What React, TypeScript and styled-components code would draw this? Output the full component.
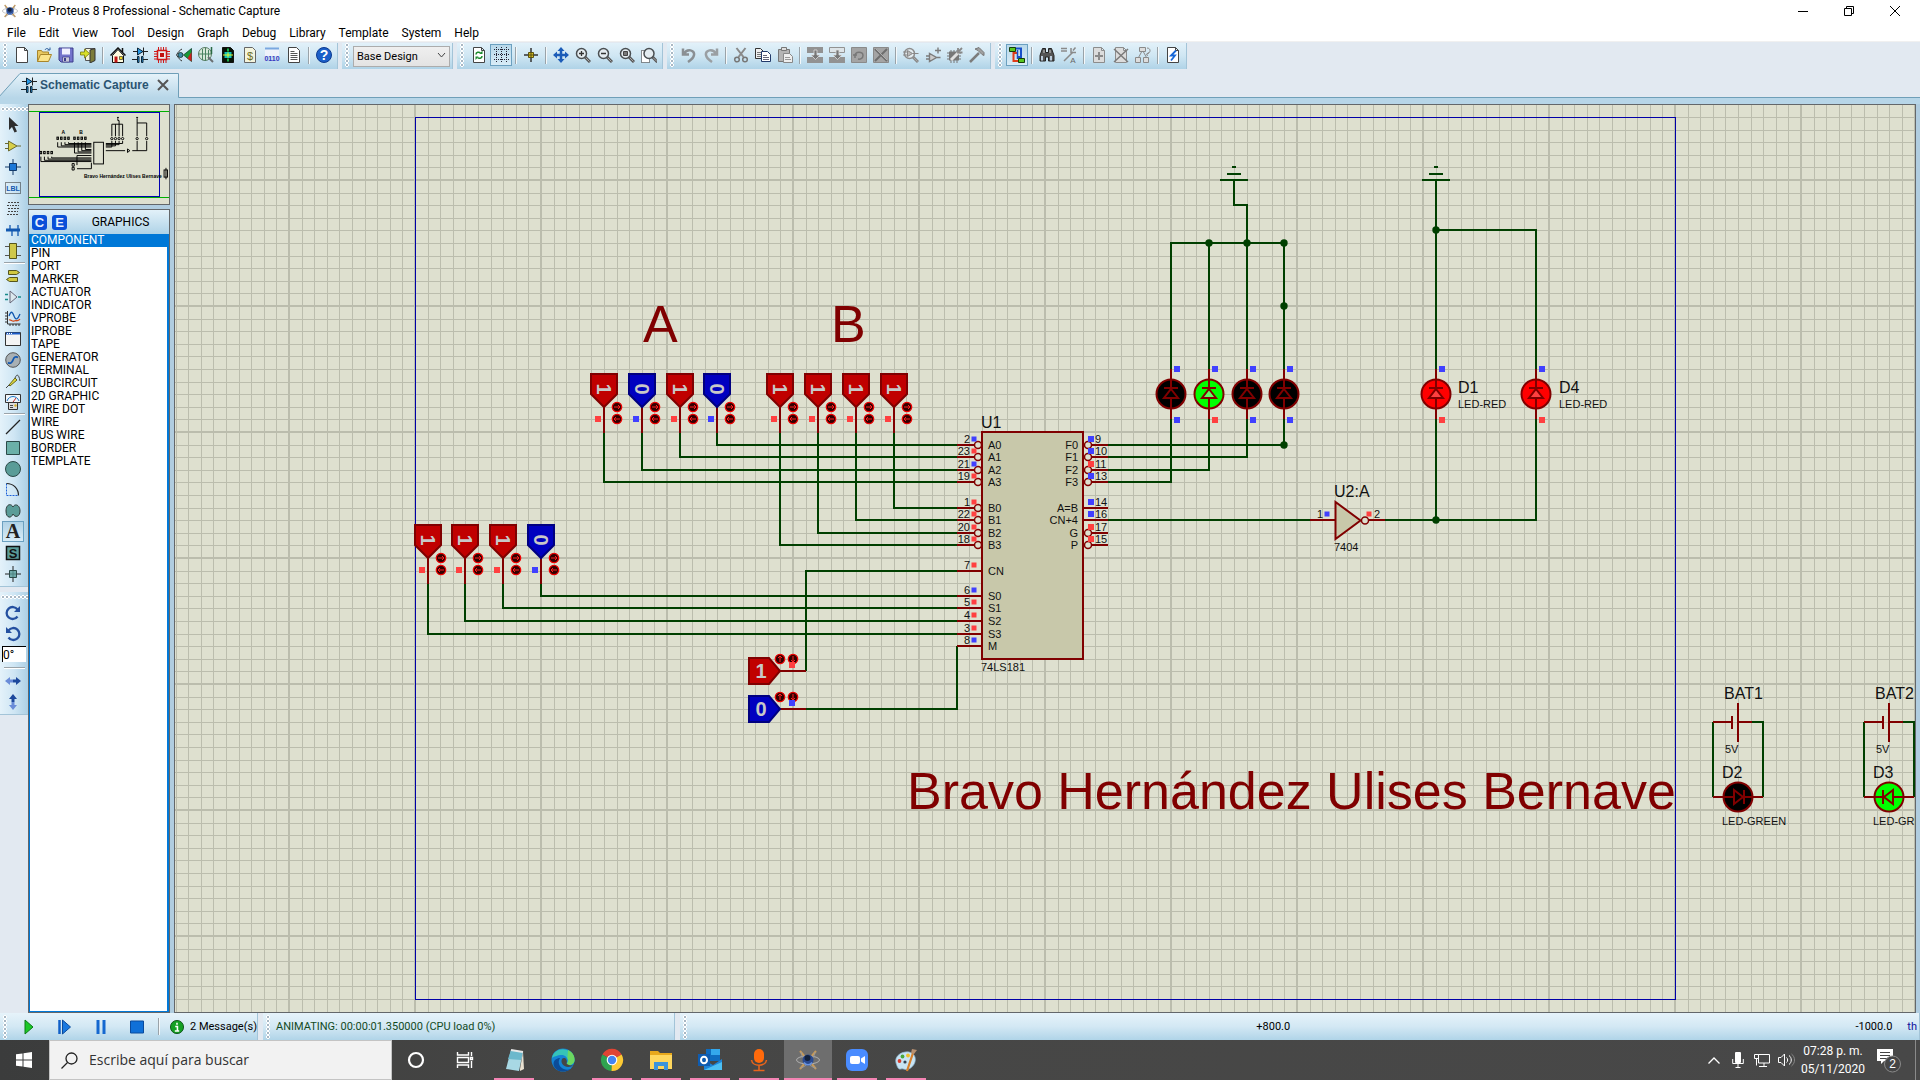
import React from "react";
import styled, { createGlobalStyle, css } from "styled-components";

const ui = `"Segoe UI", "Open Sans", "Noto Sans", sans-serif`;
const compact = `Roboto, "Liberation Sans", sans-serif`;
const sans = `"Liberation Sans", Arial, sans-serif`;
const serif = `"Liberation Serif", "Times New Roman", serif`;

const Global = createGlobalStyle`
  *, *::before, *::after { box-sizing: border-box; }
  html, body { margin: 0; padding: 0; }
  body { font-family: ${compact}; color: #000; background: #e2e9f1; overflow: hidden; }
  button, input, select { font: inherit; color: inherit; margin: 0; }
`;

/* ---------- shell ---------- */

const Window = styled.div`
  display: flex;
  flex-direction: column;
  height: 100vh;
`;

const TitleBar = styled.header`
  display: flex;
  align-items: center;
  height: 22px;
  padding: 0 2px;
  background: #fff;
`;

const TitleText = styled.h1`
  flex: 1;
  margin: 0;
  padding-left: 5px;
  font: 12px/22px ${compact};
`;

const WindowButton = styled.button`
  width: 46px;
  height: 20px;
  padding: 0;
  border: 0;
  background: none;
  display: grid;
  place-items: center;
`;

const MenuBar = styled.nav`
  display: flex;
  height: 19px;
  padding-left: 7px;
  gap: 13px;
  background: #fff;
`;

const MenuItem = styled.button`
  padding: 0;
  border: 0;
  background: none;
  font: 12px/22px ${compact};
`;

const ToolbarRow = styled.div`
  display: flex;
  gap: 4px;
  padding: 1px 0 4px;
  background: #e2e9f1;
  border-top: 1px solid #f0f0f0;
`;

const dots = css`
  background-image: radial-gradient(circle at 2px 2px, #a9b8c4 1px, #fff 1px, #fff 2px, transparent 2px);
  background-size: 4px 4px;
`;

const Toolbar = styled.div`
  display: flex;
  align-items: center;
  height: 26px;
  padding: 0 2px 2px 0;
  background: linear-gradient(#e2f1f9, #cfe6f3 50%, #afd3e7);
  border-right: 1px solid #a3c4d8;
`;

const Grip = styled.span`
  flex: none;
  width: 4px;
  height: 24px;
  margin: 0 4px 0 3px;
  ${dots}
`;

const ToolButton = styled.button<{ $on?: boolean }>`
  width: 22px;
  height: 22px;
  padding: 0;
  display: grid;
  place-items: center;
  border: 1px solid ${(p) => (p.$on ? "#6ba0c0" : "transparent")};
  background: ${(p) => (p.$on ? "linear-gradient(#b8d8ea, #d8ecf7)" : "none")};
`;

const Separator = styled.span`
  flex: none;
  width: 2px;
  height: 17px;
  margin: 0 3px;
  background: #9aa3a9;
  border-right: 1px solid #f4f8fa;
`;

const SelectBox = styled.div`
  position: relative;
  width: 97px;
  height: 21px;
`;

const Select = styled.select`
  appearance: none;
  width: 100%;
  height: 100%;
  padding: 0 0 0 3px;
  border: 1px solid #acacac;
  border-radius: 0;
  background: linear-gradient(#efefef, #e3e3e3);
  font: 11px/18px ${compact};
`;

const SelectArrow = styled.svg`
  position: absolute;
  right: 4px;
  top: 7px;
  pointer-events: none;
`;

const TabRow = styled.div`
  display: flex;
  height: 31px;
  background: #e2e9f1;
  position: relative;
  border-bottom: 6px solid #b7d6e8;
`;

const TabShape = styled.svg`
  position: absolute;
  left: 0;
  top: 0;
  width: 100%;
  height: 25px;
`;

const Tab = styled.div`
  position: relative;
  display: flex;
  align-items: center;
  height: 24px;
  padding-left: 21px;
  gap: 3px;
  font: bold 12px ${sans};
  color: #2b5472;
`;

const TabClose = styled.button`
  padding: 0;
  margin-left: 5px;
  border: 0;
  background: none;
  display: grid;
`;

const Workspace = styled.main`
  flex: 1;
  min-height: 0;
  display: flex;
  background: #b0cde0;
  padding-right: 4px;
`;

/* ---------- mode tools ---------- */

const ModeColumn = styled.aside`
  width: 28px;
  background: #e2e9f1;
  display: flex;
  flex-direction: column;
  gap: 5px;
`;

const ModeBar = styled.div`
  display: flex;
  flex-direction: column;
  padding: 0 3px 2px 2px;
  background: linear-gradient(90deg, #e4f2fa, #cfe6f4 50%, #add0e5);
  border-bottom: 1px solid #a3c4d8;
`;

const ModeGrip = styled.span`
  height: 4px;
  margin: 3px -3px 3px -1px;
  ${dots}
`;

const ModeButton = styled.button<{ $on?: boolean }>`
  height: 21px;
  width: 22px;
  padding: 0;
  display: grid;
  place-items: center;
  border: 1px solid ${(p) => (p.$on ? "#6ba0c0" : "transparent")};
  background: ${(p) => (p.$on ? "linear-gradient(#b0d2e6, #d8ecf7)" : "none")};
`;

const ModeLine = styled.span`
  height: 2px;
  margin: 1px 0 1px 2px;
  background: #9aa3a9;
  border-bottom: 1px solid #fff;
`;

const AngleInput = styled.input`
  width: 24px;
  height: 16px;
  margin: 2px 0 4px;
  padding: 0;
  border: 0;
  border-top: 1px solid #000;
  border-left: 1px solid #000;
  background: #fff;
  font: 12px/15px ${compact};
`;

/* ---------- side panel ---------- */

const SidePanel = styled.aside`
  width: 146px;
  padding-right: 4px;
  display: flex;
  flex-direction: column;
  gap: 4px;
`;

const Overview = styled.div`
  height: 101px;
  border: 1px solid #63676a;
  background: #dee0cf;
`;

const Devices = styled.section`
  flex: 1;
  min-height: 0;
  display: flex;
  flex-direction: column;
  border: 1px solid #63676a;
`;

const DevicesHead = styled.div`
  display: flex;
  align-items: center;
  height: 24px;
  padding-left: 3px;
  gap: 5px;
  background: linear-gradient(#e2f1f9, #afd3e7);
`;

const DeviceButton = styled.button`
  width: 15px;
  height: 15px;
  padding: 0;
  border: 0;
  border-radius: 3px;
  background: #0a4fd8;
  color: #e8f0ff;
  font: bold 13px/15px ${sans};
`;

const DevicesTitle = styled.h2`
  flex: 1;
  margin: 0;
  text-align: center;
  font: 12px/24px ${compact};
`;

const List = styled.ul`
  flex: 1;
  margin: 0;
  padding: 0;
  list-style: none;
  background: #fff;
  border: solid #0078d7;
  border-width: 0 2px 1px 1px;
`;

const ListItem = styled.li<{ $on: boolean }>`
  height: 13px;
  padding-left: 1px;
  font: 12px/13px ${compact};
  color: ${(p) => (p.$on ? "#fff" : "#000")};
  background: ${(p) => (p.$on ? "#0078d7" : "none")};
`;

const Canvas = styled.section`
  flex: 1;
  min-width: 0;
  border: 1px solid #63676a;
  background: #dee0cf;
`;

const Fill = styled.svg`
  display: block;
  width: 100%;
  height: 100%;
`;

/* ---------- status ---------- */

const StatusRow = styled.footer`
  display: flex;
  gap: 5px;
  height: 27px;
  background: #e2e9f1;
  font: 11px/27px ${compact};
  white-space: nowrap;
`;

const StatusBox = styled.div<{ $w?: number }>`
  display: flex;
  align-items: center;
  ${(p) => (p.$w ? `width: ${p.$w}px;` : "flex: 1;")}
  background: linear-gradient(#e6f3fa, #d3e8f4 50%, #b0d4e8);
  border-right: 1px solid #a3c4d8;
`;

const PlayButton = styled.button`
  flex: none;
  width: 36px;
  height: 24px;
  padding: 0;
  border: 0;
  background: none;
  display: grid;
  place-items: center;
`;

const Messages = styled.button`
  display: flex;
  align-items: center;
  gap: 6px;
  padding: 0 0 0 7px;
  border: 0;
  background: none;
`;

const SimText = styled.span`
  padding-left: 2px;
  color: #134a1e;
`;

const CoordX = styled.span`
  flex: 1;
  text-align: center;
`;

const CoordY = styled.span`
  padding-right: 15px;
`;

const Unit = styled.span`
  color: #10109a;
  padding-right: 2px;
`;

/* ---------- taskbar ---------- */

const Taskbar = styled.div`
  display: flex;
  height: 40px;
  background: linear-gradient(90deg, #3b3c3c, #464645 30%, #484848);
  color: #fff;
`;

const TaskButton = styled.button<{ $open?: boolean; $active?: boolean }>`
  width: 48px;
  height: 40px;
  margin-right: 1px;
  padding: 0;
  border: 0;
  display: grid;
  place-items: center;
  background: ${(p) => (p.$active ? "#6e6e6e" : "none")};
  position: relative;
  &::after {
    content: "";
    position: absolute;
    bottom: 0;
    left: ${(p) => (p.$active ? 0 : 4)}px;
    right: ${(p) => (p.$active ? 0 : 4)}px;
    height: 2px;
    background: ${(p) => (p.$open ? "#f484b4" : "transparent")};
  }
`;

const Search = styled.label`
  width: 343px;
  height: 40px;
  display: flex;
  align-items: center;
  gap: 11px;
  padding-left: 11px;
  background: #f2f2f2;
  border: 1px solid #c4c4c4;
`;

const SearchInput = styled.input`
  flex: 1;
  min-width: 0;
  padding: 0;
  border: 0;
  background: none;
  outline: 0;
  font: 14px/20px ${ui};
  &::placeholder { color: #333; opacity: 1; }
`;

const Tray = styled.div`
  margin-left: auto;
  display: flex;
  align-items: center;
`;

const TrayButton = styled.button`
  width: 24px;
  height: 40px;
  padding: 0;
  border: 0;
  background: none;
  display: grid;
  place-items: center;
`;

const Clock = styled.time`
  width: 70px;
  text-align: center;
  font: 12px/18px ${compact};
`;

const Notices = styled.button`
  width: 42px;
  height: 40px;
  margin-right: 5px;
  padding: 0;
  border: 0;
  background: none;
  display: grid;
  place-items: center;
`;

const ShowDesktop = styled.button`
  width: 5px;
  height: 40px;
  padding: 0;
  border: 0;
  border-left: 1px solid #8a8a8a;
  background: none;
`;

/* ---------- icons ---------- */

const Icon = ({ children, s = 16 }: { children: React.ReactNode; s?: number }) => (
  <svg width={s} height={s} viewBox="0 0 16 16" fill="none" aria-hidden="true">
    {children}
  </svg>
);

const Mag = ({ inner, dim }: { inner?: React.ReactNode; dim?: boolean }) => (
  <>
    <path d="M10 10l5 5" stroke={dim ? "#888" : "#555"} strokeWidth="3" />
    <path d="M10.500 10.500l4 4" stroke="#aaa" strokeWidth="1" />
    <circle cx="6.500" cy="6.500" r="5" fill="#e4ecf0" stroke={dim ? "#8d8d8d" : "#4a4f52"} strokeWidth="1.500" />
    {inner}
  </>
);

const sheet = (dim?: boolean) => (
  <path d="M2.500 .5h8l3 3v12h-11zM10.500 .5v3h3" fill={dim ? "#dcdcdc" : "#fff"} stroke={dim ? "#8c8c8c" : "#444"} />
);

const schematicMark = (
  <>
    <path d="M1 4.500h15M11.500 .5v8M0 12.500h5M11 12.500h5" stroke="#222" />
    <path d="M5.500 1v7l5.500-3.500z" fill="#2a9be8" stroke="#0c2436" />
    <path d="M5.500 9.500h1.500v6h-1.500zM9.500 9.500h1.500v6h-1.500z" fill="#2a9be8" stroke="#0c2436" />
  </>
);

const icons: Record<string, React.ReactNode> = {
  new: sheet(),
  open: (
    <>
      <path d="M1.500 14.500v-11h4l1 1.500h6v3" fill="#e8c860" stroke="#a8852a" />
      <path d="M1.500 14.500l3-7h11l-3 7z" fill="#fbe48a" stroke="#a8852a" />
      <path d="M9 3c1-2 3-2 4 0M11.500 3h2.500v-2.500" stroke="#2a5a9a" />
    </>
  ),
  save: (
    <>
      <path d="M1 1h14v14h-12l-2-2z" fill="#7474cc" stroke="#3c3c8c" />
      <path d="M4 1.500h8v6h-8z" fill="#f0f0ff" />
      <path d="M4.500 10h7v5h-7z" fill="#c8c8d8" stroke="#3c3c8c" strokeWidth=".7" />
      <path d="M6 11h2v3h-2z" fill="#3c3c8c" />
    </>
  ),
  exit: (
    <>
      <path d="M5.500 1.500h9v12h-9z" fill="#f4f4d8" stroke="#555" />
      <path d="M10 3l5-1.500v12l-5 2.500z" fill="#7c7c3a" stroke="#333" />
      <path d="M0.500 5h4v-3l5 4.500-5 4.500v-3h-4z" fill="#d8e028" stroke="#777710" strokeWidth=".8" />
    </>
  ),
  home: (
    <>
      <path d="M2.500 8.500v7h11v-7l-5.500-6z" fill="#fffce0" stroke="#111" />
      <path d="M.5 8.500l7.500-7.500 7.500 7.500M12.500 5v-4" stroke="#111" strokeWidth="1.500" />
      <path d="M4.500 9.500h3v6h-3z" fill="#c01818" />
      <path d="M9.500 9.500h3v3h-3z" fill="#f0d820" stroke="#333" strokeWidth=".7" />
    </>
  ),
  schem: schematicMark,
  pcb: (
    <>
      <path d="M4.500 0v16M7 0v16M9.500 0v16M12 0v16M0 4.500h16M0 7h16M0 9.500h16M0 12h16" stroke="#d01818" />
      <path d="M3.500 3.500h9v9h-9z" fill="#e8ecee" stroke="#d01818" strokeWidth="1.500" />
      <path d="M6 6h4v4h-4z" fill="#c01010" />
    </>
  ),
  view3d: (
    <>
      <path d="M15.500 1.500v13l-8-6.500z" fill="#189838" stroke="#143" strokeWidth=".8" />
      <path d="M15.500 5v9.500l-4-3.200z" fill="#d02020" />
      <path d="M6 2c-2 1-4 3-5.500 6 2 3 3.500 5 5.500 6" stroke="#333" />
      <circle cx="4.500" cy="8" r="2.500" fill="#3a8aa8" stroke="#244" />
    </>
  ),
  gerber: (
    <>
      <circle cx="7" cy="7" r="6.500" fill="#d8e8da" stroke="#567a62" />
      <path d="M4.500 2v11M7.500 1v13M1 7h12M10.500 3v9" stroke="#4a8260" />
      <path d="M13.500 0v7" stroke="#2a6a44" strokeWidth="1.500" />
      <path d="M10 10l5 5" stroke="#6a6f72" strokeWidth="2" />
    </>
  ),
  design: (
    <>
      <path d="M2.500 .5h8l3 3v12h-11z" fill="#061206" stroke="#111" />
      <path d="M8 1.500v3M8 11.500v3" stroke="#20e060" strokeWidth="1.500" />
      <path d="M4.500 5h7v6h-7z" fill="#10c0b8" />
      <path d="M3 8h10M8 5.500v5" stroke="#e8f828" />
    </>
  ),
  bom: (
    <>
      <path d="M2.500 .5h8l3 3v12h-11z" fill="#f4f4dc" stroke="#666" />
      <text x="8" y="12.500" fontFamily={sans} fontSize="11" fill="#6a6a20" textAnchor="middle">$</text>
    </>
  ),
  code: (
    <>
      <path d="M1 1h14v8h-14z" fill="#eef2fa" />
      <path d="M1 1.500h14" stroke="#7aa8e0" strokeWidth="2" />
      <text x="8" y="14" fontFamily={sans} fontWeight="bold" fontSize="7" fill="#3838c0" textAnchor="middle">0110</text>
    </>
  ),
  notes: (
    <>
      <path d="M2.500 .5h8l3 3v12h-11z" fill="#fff" stroke="#444" />
      <path d="M4.500 4.500h4M4.500 6.500h7M4.500 8.500h7M4.500 10.500h7M4.500 12.500h7" stroke="#555" />
    </>
  ),
  help: (
    <>
      <circle cx="8" cy="8" r="7.500" fill="#1c5fc8" stroke="#0c3a90" />
      <text x="8" y="13" fontFamily={sans} fontWeight="bold" fontSize="14" fill="#fff" textAnchor="middle">?</text>
    </>
  ),
  refresh: (
    <>
      {sheet()}
      <path d="M5 7.500c0-2.500 3-3 4.500-1.500M11 9c0 2.500-3 3-4.500 1.500" stroke="#1a8a2a" strokeWidth="1.500" />
      <path d="M8.500 7h3v-3.500zM7.500 9.500h-3v3.500z" fill="#1a8a2a" />
    </>
  ),
  grid: (
    <path d="M1 2.500h15M1 7.500h15M1 12.500h15M3.500 0v16M8.500 0v16M13.500 0v16" stroke="#223" strokeDasharray="1 1" />
  ),
  origin: (
    <>
      <path d="M8 1v14M1 8h14" stroke="#333" strokeWidth="1.500" />
      <path d="M5.500 5.500h5v5h-5z" fill="#d8c020" stroke="#5a5010" />
      <path d="M8 6v4M6 8h4" stroke="#5a5010" />
    </>
  ),
  pan: (
    <>
      <path d="M8 2v12M2 8h12" stroke="#1c5cb8" strokeWidth="2.500" />
      <path d="M8 0l3.500 4h-7zM8 16l3.500-4h-7zM0 8l4-3.500v7zM16 8l-4-3.500v7z" fill="#1c5cb8" />
    </>
  ),
  zin: <Mag inner={<path d="M4 6.500h5M6.500 4v5" stroke="#333" strokeWidth="1.300" />} />,
  zout: <Mag inner={<path d="M4 6.500h5" stroke="#333" strokeWidth="1.500" />} />,
  zall: <Mag inner={<path d="M4.500 4.500h4v4h-4z" fill="#777" stroke="#444" />} />,
  zarea: (
    <>
      <path d="M.5 3.500h8v12h-8z" fill="#fff" stroke="#222" strokeDasharray="1 1" />
      <g transform="translate(1.500 0)"><Mag /></g>
    </>
  ),
  undo: <path d="M2 1.500v6h6M3 7c3-6 11-4 10 1-.5 3-3 5-6 7" stroke="#8a8f93" strokeWidth="2.500" />,
  redo: <path d="M14 1.500v6h-6M13 7c-3-6-11-4-10 1 .5 3 3 5 6 7" stroke="#9a9fa3" strokeWidth="2.500" />,
  cut: (
    <>
      <path d="M3.500 1l7 9M12.500 1l-7 9" stroke="#8a8a8a" strokeWidth="2" />
      <circle cx="4" cy="12.500" r="2.300" stroke="#777" strokeWidth="1.500" />
      <circle cx="12" cy="12.500" r="2.300" stroke="#777" strokeWidth="1.500" />
    </>
  ),
  copy: (
    <>
      <path d="M.5 1.500h5l3 3v7h-8z" fill="#f0f0f0" stroke="#333" />
      <path d="M2 5.500h4M2 7.500h5M2 9.500h4" stroke="#777" />
      <path d="M6.500 4.500h6l3 3v7h-9z" fill="#fff" stroke="#223a6a" />
      <path d="M8 8.500h4M8 10.500h6M8 12.500h6" stroke="#667" />
    </>
  ),
  paste: (
    <>
      <path d="M1.500 2.500h11v12h-11z" fill="#b4b4b4" stroke="#777" />
      <path d="M4.500 .5h5v3h-5z" fill="#ddd" stroke="#777" />
      <path d="M6.500 6.500h6l3 3v6h-9z" fill="#eee" stroke="#888" />
      <path d="M8 10.500h5M8 12.500h6" stroke="#999" />
    </>
  ),
  blkcopy: (
    <>
      <path d="M0 0h16v6h-16zM0 10h16v6h-16z" fill="#929292" />
      <path d="M7 3h3v5h3l-4.500 4.500-4.500-4.500h3z" fill="#777" stroke="#ddd" strokeWidth=".8" />
    </>
  ),
  blkmove: (
    <>
      <path d="M.5 .5h15v5h-15z" fill="#dde4e8" stroke="#929292" />
      <path d="M0 10h16v6h-16z" fill="#929292" />
      <path d="M7 3h3v5h3l-4.500 4.500-4.500-4.500h3z" fill="#777" stroke="#ddd" strokeWidth=".8" />
    </>
  ),
  blkrot: (
    <>
      <path d="M.5 .5h15v15h-15z" fill="#a4a4a4" stroke="#8a8a8a" />
      <path d="M4 9c0-5 8-5 8-.5 0 3-3 4-5 3.500M2 8h4M4 8v3" stroke="#777" strokeWidth="1.500" />
    </>
  ),
  blkdel: (
    <>
      <path d="M.5 .5h15v15h-15z" fill="#a4a4a4" stroke="#8a8a8a" />
      <path d="M2 2l12 12M14 2l-12 12" stroke="#6e6e6e" strokeWidth="2" />
      <path d="M2.500 1.500l11.500 11.500" stroke="#ccc" strokeWidth=".7" />
    </>
  ),
  pick: (
    <Mag dim inner={<path d="M4.500 3.500v6l5-3zM0 5h4M0 8h4M9.500 6.500h6" fill="#bbb" stroke="#888" />} />
  ),
  make: <path d="M4.500 6.500v8l7-4zM1 9h3M1 12h3M11.500 10.500h4M10 3.500h6M13 .5v6" fill="#ccc" stroke="#7c7c7c" strokeWidth="1.400" />,
  pack: (
    <>
      <path d="M0 6h14M0 9h14M0 12h14M4 3v13M7 3v13M10 3v13" stroke="#777" />
      <path d="M2 4.500h10v9h-10z" fill="#777" />
      <path d="M4 13l8-8" stroke="#e0e0e0" strokeWidth="3" />
      <path d="M15 1l-3 3M11 1v4.500h4.500" stroke="#888" strokeWidth="1.800" />
    </>
  ),
  decomp: (
    <>
      <path d="M1 15l9-9" stroke="#7c7c7c" strokeWidth="2.500" />
      <path d="M6 2l4-1.500 5 5v3l-2-1-4-4z" fill="#a0a0a0" stroke="#777" />
    </>
  ),
  auto: (
    <>
      <path d="M6 1.500h6v4M12 5v5h-3" stroke="#1850c8" strokeWidth="2" />
      <path d="M8 6h-3.500v8h5" stroke="#e03c18" strokeWidth="2" />
      <path d="M8.500 3v9" stroke="#1850c8" strokeWidth="1.500" />
      <path d="M.5 .5h6v4h-6zM9.500 11.500h6v4h-6z" fill="#58c820" stroke="#143c08" />
    </>
  ),
  find: (
    <>
      <path d="M3.500 1.500h3v4h3v-4h3l2.500 7v5.500h-5.500v-4h-3v4h-5.500v-5.500z" fill="#555" stroke="#222" />
      <path d="M3 9v4.500M12 9v4.500" stroke="#bcd" strokeWidth="2" />
      <path d="M5 3v3M11 3v3" stroke="#ccc" />
    </>
  ),
  propt: (
    <>
      <path d="M0 1.500h6M0 4h6M3 14l9-9" stroke="#8a8a8a" strokeWidth="1.500" />
      <path d="M14.500 .5l-2.500 3M10 1v4.500h5" stroke="#8a8a8a" strokeWidth="1.500" />
      <text x="12" y="16" fontFamily={sans} fontSize="8" fill="#666" textAnchor="middle">A</text>
    </>
  ),
  addsheet: (
    <>
      {sheet(true)}
      <path d="M8 5v8M4 9h8" stroke="#8a8a8a" strokeWidth="2" />
    </>
  ),
  delsheet: (
    <>
      {sheet(true)}
      <path d="M1 2l14 13M15 2l-14 13" stroke="#7a7a7a" strokeWidth="1.500" />
    </>
  ),
  hier: (
    <>
      <path d="M4.500 .5h6v4h-6zM.5 10.500h5v5h-5zM8.500 10.500h5v5h-5z" fill="#ddd" stroke="#8a8a8a" />
      <path d="M6.500 5l-3 5.500M8.500 5l3 5.500M12 1c4 0 4 5 0 6M14 5.500l-2.500 1.500 1 2" stroke="#8a8a8a" />
    </>
  ),
  erc: (
    <>
      {sheet()}
      <path d="M11 3.500l-5 5h4l-4 5" stroke="#1868d8" strokeWidth="1.800" />
    </>
  ),
  /* mode tools */
  select: <path d="M4 0v13l3-3 2.500 5.500 2.500-1-2.500-5.500h4z" fill="#2e2e2e" />,
  comp: <path d="M3.500 3v10l8.500-5zM0 5.500h4M0 10.500h4M12 8h4" fill="#d8cf48" stroke="#6a6a30" />,
  junction: (
    <>
      <path d="M8 0v16M0 8h16" stroke="#123a6a" />
      <path d="M4.500 4.500h7v7h-7z" fill="#1c78d8" stroke="#123a6a" />
    </>
  ),
  label: (
    <>
      <path d="M.5 2.500h15v11h-15z" stroke="#222" strokeDasharray="1 1" />
      <text x="8" y="11" fontFamily={sans} fontWeight="bold" fontSize="7" fill="#1258b0" textAnchor="middle">LBL</text>
    </>
  ),
  script: <path d="M3 1.500h11M2 4.500h4M7 4.500h7M3 7.500h11M3 10.500h10M2 13.500h12" stroke="#444" strokeDasharray="2 1" />,
  bus: (
    <>
      <path d="M5 3v5M13 3v5M7 8v6M13 8v6" stroke="#1258b0" strokeWidth="1.300" />
      <path d="M1 8h14" stroke="#1258b0" strokeWidth="3" />
    </>
  ),
  sub: (
    <>
      <path d="M0 3.500h16M0 12.500h16" stroke="#555" />
      <path d="M4.500 .5h7v15h-7z" fill="#cfc84a" stroke="#55551c" />
    </>
  ),
  term: (
    <path d="M3.500 2.500h8l3 2-3 2h-8zM12.500 9.500h-8l-3 2 3 2h8z" fill="#d0c840" stroke="#55551c" />
  ),
  pin: (
    <>
      <path d="M5 2v12l7-6z" fill="#dce8ee" stroke="#667" />
      <path d="M0 5.500h3M0 10.500h3M13 8h3" stroke="#188a8a" strokeWidth="1.500" />
    </>
  ),
  graph: (
    <>
      <path d="M2.500 1v13h13M0 3h2M0 6h2M0 9h2M0 12h2M5 16v-2M8 16v-2M11 16v-2M14 16v-2" stroke="#333" />
      <path d="M4 6c2-5 3-5 5 0s4 3 6-2" stroke="#1258b0" strokeWidth="1.300" />
      <path d="M4 10c2-1 3 2 5 1s4 1 6-2" stroke="#d04818" strokeWidth="1.300" />
    </>
  ),
  tape: (
    <>
      <path d="M.5 1.500h15v13h-15z" fill="#f4f4f4" stroke="#333" />
      <path d="M1 2.500h14" stroke="#1c5cc8" strokeWidth="2" />
      <path d="M2 2.500h5" stroke="#fff" strokeDasharray="1 1" />
    </>
  ),
  gen: (
    <>
      <circle cx="8" cy="8" r="7.300" fill="#a8b0b4" stroke="#555" />
      <path d="M3 10.500c2 1.500 4 .5 5-2.500s3-4 5-2.500" stroke="#1258b0" strokeWidth="1.800" />
    </>
  ),
  probe: (
    <>
      <path d="M1 15l4-4M10 5c2-5 4-3 5 3" stroke="#444" />
      <path d="M4 12l6-7 2 2-7 6z" fill="#e0d840" stroke="#66661c" />
    </>
  ),
  meter: (
    <>
      <path d="M.5 .5h15v8h-15z" fill="#f0f4f8" stroke="#333" />
      <path d="M2 7c2-6 10-6 12 0" stroke="#1c78c8" />
      <path d="M8 8l3-4" stroke="#c02020" />
      <path d="M3.500 8.500h9v7h-9z" fill="#ddd" stroke="#333" />
      <path d="M5 11.500h3M5 13.500h3" stroke="#444" />
      <circle cx="10.500" cy="11.500" r="1.200" fill="#d8b020" />
    </>
  ),
  line: <path d="M1 15l14-14" stroke="#222" strokeWidth="1.300" />,
  box: <path d="M1.500 1.500h13v13h-13z" fill="#6bb0a8" stroke="#2c4a48" />,
  circle: <circle cx="8" cy="8" r="7.500" fill="#5a9c98" stroke="#2c4a48" />,
  arc: (
    <>
      <path d="M1.500 1.500v12h12" stroke="#1c60d8" strokeDasharray="2 1" />
      <path d="M1.500 1.500c7 0 12 5 12 12" stroke="#222" strokeWidth="1.200" />
    </>
  ),
  path2d: (
    <path d="M8 4c-2-4-7-3-7 4s5 8 7 3c2 4 7 3 7-3s-5-8-7-4z" fill="#5a9c98" stroke="#2c3a38" />
  ),
  text: (
    <text x="8" y="14" fontFamily={serif} fontWeight="bold" fontSize="20" fill="#222" textAnchor="middle">A</text>
  ),
  symbol: (
    <>
      <path d="M1.500 1.500h13v13h-13z" fill="#5a9c98" stroke="#111" strokeWidth="1.500" />
      <text x="8" y="13" fontFamily={sans} fontWeight="bold" fontSize="13" fill="#111" textAnchor="middle">S</text>
    </>
  ),
  marker: (
    <>
      <path d="M8 0v16M0 8h16" stroke="#222" />
      <path d="M4.500 4.500h7v7h-7z" fill="#5a9c98" fillOpacity=".8" stroke="#2c4a48" />
    </>
  ),
  cw: (
    <>
      <path d="M12.500 11.500a6 6 0 1 1 0-7" stroke="#2450a0" strokeWidth="2.300" />
      <path d="M15 1v6h-6z" fill="#2450a0" />
    </>
  ),
  ccw: (
    <>
      <path d="M3.500 11.500a6 6 0 1 0 0-7" stroke="#2450a0" strokeWidth="2.300" />
      <path d="M1 1v6h6z" fill="#2450a0" />
    </>
  ),
  fliph: (
    <>
      <path d="M0 8l5-4v2.500h3v3h-3v2.500z" fill="#6a8cd8" />
      <path d="M16 8l-5-4v2.500h-3v3h3v2.500z" fill="#1c489c" />
    </>
  ),
  flipv: (
    <>
      <path d="M8 0l4 5h-2.500v3h-3v-3h-2.500z" fill="#1c489c" />
      <path d="M8 16l4-5h-2.500v-3h-3v3h-2.500z" fill="#6a8cd8" />
    </>
  ),
};

/* ---------- schematic geometry ---------- */

const PITCH = 12.6;
const X = (u: number) => Math.round(415 + u * PITCH);
const Y = (u: number) => Math.round(180 + u * PITCH);
const RED = "#800000";
const GREEN = "#004000";
const HI = "#ff4040";
const LO = "#4040ff";

const range = (a: number, b: number) => Array.from({ length: b - a + 1 }, (_, i) => a + i);

const gridPath = (major: boolean) => {
  const w = major ? 2 : 1;
  const o = major ? 1 : 0;
  const pick = (u: number) => (u % 10 === 0) === major;
  return (
    range(-20, 220).filter(pick).map((u) => `M${X(u) - o} 0h${w}v1600h-${w}z`).join("") +
    range(-8, 110).filter(pick).map((u) => `M100 ${Y(u) - o}h3200v${w}h-3200z`).join("")
  );
};

/* each wire is a list of grid points */
const wires: number[][] = [
  [15, 20, 15, 24, 43, 24], [18, 20, 18, 23, 43, 23], [21, 20, 21, 22, 43, 22], [24, 20, 24, 21, 43, 21],
  [29, 20, 29, 29, 43, 29], [32, 20, 32, 28, 43, 28], [35, 20, 35, 27, 43, 27], [38, 20, 38, 26, 43, 26],
  [1, 32, 1, 36, 43, 36], [4, 32, 4, 35, 43, 35], [7, 32, 7, 34, 43, 34], [10, 32, 10, 33, 43, 33],
  [31, 39, 31, 31, 43, 31], [31, 42, 43, 42, 43, 37],
  [55, 21, 69, 21, 69, 19], [55, 22, 66, 22, 66, 19], [55, 23, 63, 23, 63, 19], [55, 24, 60, 24, 60, 19],
  [60, 15, 60, 5, 69, 5, 69, 15], [63, 5, 63, 15], [66, 15, 66, 2, 65, 2, 65, 0],
  [55, 27, 71, 27], [77, 27, 89, 27, 89, 19], [81, 27, 81, 19], [81, 15, 81, 0], [81, 4, 89, 4, 89, 15],
];
const wirePath = wires
  .map((w) => w.reduce((s, _, i) => (i % 2 ? s : `${s}${i ? "L" : "M"}${X(w[i])} ${Y(w[i + 1])}`), ""))
  .join("");
const junctions = [[63, 5], [66, 5], [69, 5], [69, 10], [69, 21], [81, 4], [81, 27]];

const Flag = ({ cx, cy, hi, r = 3 }: { cx: number; cy: number; hi: boolean; r?: number }) => (
  <rect x={cx - r} y={cy - r} width={r * 2} height={r * 2} fill={hi ? HI : LO} />
);

const Nudge = ({ x, y, turn }: { x: number; y: number; turn: number }) => (
  <g transform={`translate(${x} ${y}) rotate(${turn})`}>
    <circle r="4.700" fill="#300" stroke="#f00000" strokeWidth="1.300" />
    <path d="M-3 0h6M1 -2l2 2l-2 2" fill="none" stroke="#ff2020" />
  </g>
);

const Digit = ({ on }: { on: boolean }) => (
  <text y="7" fontFamily={sans} fontWeight="bold" fontSize="20" fill="#c8c8c8" textAnchor="middle">
    {on ? 1 : 0}
  </text>
);

const Toggle = ({ u, v, on }: { u: number; v: number; on: boolean }) => {
  const x = X(u);
  const y = Y(v);
  return (
    <g>
      <g transform={`translate(${x} ${y})`}>
        <path d="M0 0v26" stroke={RED} strokeWidth="2" />
        <path d="M-13-33h26v20l-13 13l-13-13z" fill={on ? "#c00000" : "#0000c0"} stroke={on ? RED : "#000080"} strokeWidth="2" />
        <g transform="translate(0 -18) rotate(90)"><Digit on={on} /></g>
      </g>
      <Nudge x={x + 13} y={y} turn={0} />
      <Nudge x={x + 13} y={y + 12} turn={180} />
      <Flag cx={x - 6} cy={y + 12} hi={on} />
    </g>
  );
};

const SideToggle = ({ u, v, on }: { u: number; v: number; on: boolean }) => {
  const x = X(u);
  const y = Y(v);
  return (
    <g>
      <path d={`M${x} ${y}h26`} stroke={RED} strokeWidth="2" />
      <path d={`M${x - 31} ${y - 13}h20l11 13l-11 13h-20z`} fill={on ? "#c00000" : "#0000c0"} stroke={on ? RED : "#000080"} strokeWidth="2" />
      <g transform={`translate(${x - 19} ${y})`}><Digit on={on} /></g>
      <Nudge x={x} y={y - 12} turn={-90} />
      <Nudge x={x + 13} y={y - 12} turn={90} />
      <Flag cx={x + 12} cy={y - 6} hi={on} />
    </g>
  );
};

const Led = ({ x, y, turn, fill, core }: { x: number; y: number; turn: number; fill: string; core: string }) => (
  <g transform={`translate(${x} ${y}) rotate(${turn})`} stroke={RED} strokeWidth="2">
    <path d="M0-25v10M0 15v10" />
    <circle r="14.500" fill={fill} />
    <path d="M0-15v10M0 4v11M-7-6h14" fill="none" />
    <path d="M0-5l7 9h-14z" fill={core} />
  </g>
);

const leds: [number, string, string, boolean][] = [
  [60, "#000", "#000", false],
  [63, "#00ff00", "#60ff60", true],
  [66, "#000", "#000", false],
  [69, "#000", "#000", false],
  [81, "#ff0000", "#ff4040", true],
  [89, "#ff0000", "#ff4040", true],
];

/* row, number, name, high, bubble */
type Pin = [number, string, string, boolean, boolean];
const leftPins: Pin[] = [
  [21, "2", "A0", false, true], [22, "23", "A1", true, true], [23, "21", "A2", false, true], [24, "19", "A3", true, true],
  [26, "1", "B0", true, true], [27, "22", "B1", true, true], [28, "20", "B2", true, true], [29, "18", "B3", true, true],
  [31, "7", "CN", true, false], [33, "6", "S0", false, false], [34, "5", "S1", true, false],
  [35, "4", "S2", true, false], [36, "3", "S3", true, false], [37, "8", "M", false, false],
];
const rightPins: Pin[] = [
  [21, "9", "F0", false, true], [22, "10", "F1", false, true], [23, "11", "F2", true, true], [24, "13", "F3", false, true],
  [26, "14", "A=B", false, false], [27, "16", "CN+4", false, false], [28, "17", "G", true, true], [29, "15", "P", true, true],
];

const Chip = () => (
  <g>
    <rect x={X(45)} y={Y(20)} width="101" height="227" fill="#c8c8aa" stroke={RED} strokeWidth="2" />
    {leftPins.map(([v, n, name, hi, bubble]) => (
      <g key={n}>
        <path d={`M${X(43)} ${Y(v)}h${bubble ? 18 : 25}`} stroke={RED} strokeWidth="2" />
        {bubble && <circle cx="978" cy={Y(v)} r="3.500" fill="#dee0cf" stroke={RED} strokeWidth="1.500" />}
        <Flag cx={974} cy={Y(v) - 6} hi={hi} r={2.5} />
        <text x="970" y={Y(v) - 2} textAnchor="end">{n}</text>
        <text x="988" y={Y(v) + 4}>{name}</text>
      </g>
    ))}
    {rightPins.map(([v, n, name, hi, bubble]) => (
      <g key={n}>
        <path d={`M${X(55)} ${Y(v)}h${bubble ? -17 : -25}`} stroke={RED} strokeWidth="2" />
        {bubble && <circle cx="1088" cy={Y(v)} r="3.500" fill="#dee0cf" stroke={RED} strokeWidth="1.500" />}
        <Flag cx={1091} cy={Y(v) - 6} hi={hi} />
        <text x="1095" y={Y(v) - 2}>{n}</text>
        <text x="1078" y={Y(v) + 4} textAnchor="end">{name}</text>
      </g>
    ))}
    <text x="981" y="428" fontSize="16">U1</text>
    <text x="981" y="671">74LS181</text>
  </g>
);

const Battery = ({ u, bat, led, lit }: { u: number; bat: string; led: string; lit: boolean }) => (
  <g transform={`translate(${X(u)} 0)`}>
    <path d="M-25 722V797M14 722H25V797" fill="none" stroke={GREEN} strokeWidth="2" />
    <path d="M-25 722H-6M0 722H14M-6 716v13M0 703v39" stroke={RED} strokeWidth="2" />
    <Led x={0} y={797} turn={lit ? -90 : 90} fill={lit ? "#00ff00" : "#000"} core="none" />
    <text x="-14" y="699" fontSize="16">{bat}</text>
    <text x="-13" y="753">5V</text>
    <text x="-16" y="778" fontSize="16">{led}</text>
    <text x="-16" y="825">LED-GREEN</text>
  </g>
);

const Schematic = () => (
  <Fill role="img" aria-label="Schematic sheet">
    <g transform="translate(-175 -105)">
      <path d={gridPath(false)} fill="#bbbdad" shapeRendering="crispEdges" />
      <path d={gridPath(true)} fill="#bbbdad" shapeRendering="crispEdges" />
      <rect x="415.500" y="117.500" width="1260" height="882" fill="none" stroke="#0000a8" />
      <path d={wirePath} fill="none" stroke={GREEN} strokeWidth="2" />
      {[65, 81].map((u) => (
        <path key={u} d={`M${X(u) - 14} 180h28M${X(u) - 7} 174h14M${X(u) - 2} 167h4`} stroke={GREEN} strokeWidth="2" />
      ))}
      {junctions.map(([u, v]) => (
        <circle key={`${u}-${v}`} cx={X(u)} cy={Y(v)} r="3.700" fill={GREEN} />
      ))}
      {[[15, 1], [18, 0], [21, 1], [24, 0], [29, 1], [32, 1], [35, 1], [38, 1]].map(([u, b]) => (
        <Toggle key={u} u={u} v={18} on={!!b} />
      ))}
      {[[1, 1], [4, 1], [7, 1], [10, 0]].map(([u, b]) => (
        <Toggle key={u} u={u} v={30} on={!!b} />
      ))}
      <SideToggle u={29} v={39} on />
      <SideToggle u={29} v={42} on={false} />
      <g fontFamily={sans} fontSize="11" fill="#111">
        <Chip />
        {leds.map(([u, fill, core, hi]) => (
          <g key={u}>
            <Led x={X(u)} y={394} turn={0} fill={fill} core={core} />
            <Flag cx={X(u) + 6} cy={369} hi={false} />
            <Flag cx={X(u) + 6} cy={420} hi={hi} />
          </g>
        ))}
        <text x="1458" y="393" fontSize="16">D1</text>
        <text x="1458" y="408">LED-RED</text>
        <text x="1559" y="393" fontSize="16">D4</text>
        <text x="1559" y="408">LED-RED</text>
        <path d={`M${X(71)} 520H1335M1368 520H${X(77)}`} stroke={RED} strokeWidth="2" />
        <path d="M1335.500 502v37l25-18.500z" fill="#c8c8aa" stroke={RED} strokeWidth="2" />
        <circle cx="1365" cy="520.500" r="3.500" fill="#dee0cf" stroke={RED} strokeWidth="1.500" />
        <text x="1317" y="518">1</text>
        <Flag cx={1327} cy={514} hi={false} r={2.5} />
        <Flag cx={1369} cy={514} hi r={2.5} />
        <text x="1374" y="518">2</text>
        <text x="1334" y="497" fontSize="16">U2:A</text>
        <text x="1334" y="551">7404</text>
        <Battery u={105} bat="BAT1" led="D2" lit={false} />
        <Battery u={117} bat="BAT2" led="D3" lit />
      </g>
      <g fontFamily={sans} fontSize="52" fill={RED}>
        <text x="643" y="342">A</text>
        <text x="831" y="342">B</text>
        <text x="907" y="809">Bravo Hernández Ulises Bernave</text>
      </g>
    </g>
  </Fill>
);

const Thumbnail = () => (
  <Fill viewBox="0 0 140 99" preserveAspectRatio="xMinYMin meet" aria-hidden="true">
    <path d="M0 6.500h140M0 92.500h140" stroke="#00b000" />
    <rect x="10.500" y="7.500" width="120" height="84" fill="none" stroke="#0000b0" />
    <g transform="translate(-29 -4) scale(.0955)" stroke="#000" strokeWidth="10" fill="none">
      <path d={wirePath} />
      <rect x="982" y="432" width="101" height="227" />
      {[15, 18, 21, 24, 29, 32, 35, 38].map((u) => <rect key={u} x={X(u) - 8} y="378" width="16" height="24" />)}
      {[1, 4, 7, 10].map((u) => <rect key={u} x={X(u) - 8} y="528" width="16" height="24" />)}
      {[60, 63, 66, 69, 81, 89].map((u) => <circle key={u} cx={X(u)} cy="394" r="12" />)}
      <path d="M755 655h22v28h-22zM755 695h22v28h-22zM1335 502v37l25-19zM1225 172h20M1426 172h20" />
      <rect x="1718" y="722" width="36" height="75" />
      <path d="M1738 700v120" />
      <g fontFamily={sans} fontSize="52" fontWeight="bold" fill="#000" stroke="none">
        <text x="643" y="342">A</text>
        <text x="831" y="342">B</text>
        <text x="880" y="809">Bravo Hernández Ulises Bernave</text>
      </g>
    </g>
  </Fill>
);

/* ---------- taskbar pictures ---------- */

const Big = ({ children }: { children: React.ReactNode }) => (
  <svg width="24" height="24" viewBox="0 0 24 24" fill="none" aria-hidden="true">{children}</svg>
);

const Atom = () => (
  <>
    <path d="M4 3l5 6M20 3l-5 6M4 21l5-6M20 21l-5-6" stroke="#c89a58" strokeWidth="2" />
    <ellipse cx="12" cy="12" rx="11.500" ry="4" stroke="#b0b0b0" />
    <path d="M5 4c0 6 10 16 15 16M19 4c0 6-10 16-15 16" stroke="#9a9a9a" />
    <circle cx="12" cy="12" r="5.500" fill="#2a4a90" />
    <circle cx="11.500" cy="10" r="3" fill="#14223c" />
    <path d="M8 14.500c2 3 6 3 8 0" stroke="#6a94e0" strokeWidth="1.500" />
  </>
);

const tasks: { name: string; open?: boolean; active?: boolean; art: React.ReactNode }[] = [
  { name: "Cortana", art: <circle cx="12" cy="12" r="7" stroke="#fff" strokeWidth="2.200" /> },
  {
    name: "Task view",
    art: <path d="M4.500 4v3h11v-3M4.500 20v-3h11v3M4.500 9.500h11v5h-11zM18.500 4v4M18.500 13v7M17.500 9.500h2v2h-2z" stroke="#fff" strokeWidth="1.400" />,
  },
  {
    name: "Notepad", open: true,
    art: (
      <>
        <path d="M9 2l12 2-4 19-13-2z" fill="#a8d8e4" />
        <path d="M9 2l12 2-2 8-13-1z" fill="#6cb8cc" />
        <path d="M18 21l3-17 1 17-4 2z" fill="#e8e0d0" />
        <path d="M9 2l12 2" stroke="#e8e8e8" strokeWidth="2" />
      </>
    ),
  },
  {
    name: "Edge",
    art: (
      <>
        <circle cx="12" cy="12" r="11.500" fill="#1484d4" />
        <path d="M1 10c2-12 21-12 22.500 2 0 5-6 6-8 4 3-4 0-9-5-9-4 0-8 2-9.500 3z" fill="#36c4b8" />
        <path d="M17 2c5 2 7 7 6.500 10 0 5-6 6-8 4 2-2 2-4 1-6z" fill="#6cd860" />
        <path d="M9 10c-4 6 2 14 11 11-4 3-12 4-16-1-4-6 1-10 5-10z" fill="#0c4c98" />
        <path d="M11 11c-2 4 2 8 6 8 3 0 4-1 5-2-3 1-5 0-6.500-1.500 1-2 0-5-2-5.500-1 0-2 0-2.500 1z" fill="#464646" />
      </>
    ),
  },
  {
    name: "Chrome", open: true,
    art: (
      <>
        <path d="M12 12L2.400 6.500A11 11 0 0 1 21.600 6.500z" fill="#e04434" />
        <path d="M12 12L2.400 6.500A11 11 0 0 0 11.500 23z" fill="#2fa350" />
        <path d="M12 12L21.600 6.500A11 11 0 0 1 11.500 23z" fill="#fcc934" />
        <circle cx="12" cy="12" r="5.300" fill="#fff" />
        <circle cx="12" cy="12" r="4.200" fill="#4484f0" />
      </>
    ),
  },
  {
    name: "File Explorer", open: true,
    art: (
      <>
        <path d="M1 3h8l2 2h12v16h-22z" fill="#e8a81c" />
        <path d="M1 7h22v14h-22z" fill="#ffd75e" />
        <path d="M5 22v-8h14v8h-4v-4h-6v4z" fill="#3c94dc" />
      </>
    ),
  },
  {
    name: "Outlook", open: true,
    art: (
      <>
        <path d="M8 1h14v12h-14z" fill="#0f6cbf" />
        <path d="M13 1h9v6h-9z" fill="#34a8ec" />
        <path d="M6 12l9 5 9-6v11h-18z" fill="#1c84d8" />
        <path d="M6 22l18-8v8z" fill="#4cc0f4" />
        <path d="M0 6h12v12h-12z" fill="#0f5cb0" />
        <ellipse cx="6" cy="12" rx="3" ry="3.300" stroke="#fff" strokeWidth="2" />
      </>
    ),
  },
  {
    name: "Recorder", open: true,
    art: (
      <>
        <rect x="7" y="1" width="10" height="14" rx="5" fill="#ff6a0c" />
        <path d="M4.500 12c1 7 14 7 15 0M12 17v5M6.500 22.500h11" stroke="#e8641c" strokeWidth="1.600" />
      </>
    ),
  },
  { name: "Proteus", open: true, active: true, art: <Atom /> },
  {
    name: "Zoom", open: true,
    art: (
      <>
        <rect x="1" y="1" width="22" height="22" rx="6" fill="#4a8cff" />
        <rect x="5" y="8" width="10" height="8" rx="2" fill="#fff" />
        <path d="M16 10.500l4-2.500v8l-4-2.500z" fill="#fff" />
      </>
    ),
  },
  {
    name: "Paint", open: true,
    art: (
      <>
        <path d="M2 15c-2-7 6-12 13-11 9 2 8 13 0 17-4 2-5-1-8 0-3 1-4-3-5-6z" fill="#c8e4f4" stroke="#88b0cc" strokeWidth=".7" />
        <circle cx="5.500" cy="13" r="1.900" fill="#d83c2c" />
        <circle cx="8.500" cy="8.500" r="1.900" fill="#48a83c" />
        <circle cx="14" cy="7.500" r="1.900" fill="#f0c02c" />
        <circle cx="11" cy="14" r="1.600" fill="#345" />
        <path d="M13 23l6-18" stroke="#d8802c" strokeWidth="2.200" />
        <path d="M18 1l5 1-3 4-3-1z" fill="#b89070" />
      </>
    ),
  },
];

/* ---------- composition ---------- */

const menus = ["File", "Edit", "View", "Tool", "Design", "Graph", "Debug", "Library", "Template", "System", "Help"];
const devices = [
  "COMPONENT", "PIN", "PORT", "MARKER", "ACTUATOR", "INDICATOR", "VPROBE", "IPROBE", "TAPE", "GENERATOR",
  "TERMINAL", "SUBCIRCUIT", "2D GRAPHIC", "WIRE DOT", "WIRE", "BUS WIRE", "BORDER", "TEMPLATE",
];

const Tools = ({ names, on }: { names: string; on?: string }) => (
  <>
    {names.split(" ").map((n, i) =>
      n === "|" ? (
        <Separator key={i} />
      ) : (
        <ToolButton key={i} $on={n === on} aria-label={n}>
          <Icon>{icons[n]}</Icon>
        </ToolButton>
      )
    )}
  </>
);

const Modes = ({ names, on }: { names: string; on?: string }) => (
  <>
    {names.split(" ").map((n, i) =>
      n === "|" ? (
        <ModeLine key={i} />
      ) : (
        <ModeButton key={i} $on={n === on} aria-label={n}>
          <Icon>{icons[n]}</Icon>
        </ModeButton>
      )
    )}
  </>
);

export default function App() {
  return (
    <Window>
      <Global />
      <TitleBar>
        <svg width="16" height="16" viewBox="0 0 24 24" fill="none" aria-hidden="true"><Atom /></svg>
        <TitleText>alu - Proteus 8 Professional - Schematic Capture</TitleText>
        <WindowButton aria-label="Minimize"><svg width="10" height="10"><path d="M0 5.500h10" stroke="#000" /></svg></WindowButton>
        <WindowButton aria-label="Restore">
          <svg width="10" height="10" fill="none" stroke="#000"><path d="M.5 2.500h7v7h-7zM2.500 2.500v-2h7v7h-2" /></svg>
        </WindowButton>
        <WindowButton aria-label="Close"><svg width="10" height="10"><path d="M0 0l10 10M10 0l-10 10" stroke="#000" /></svg></WindowButton>
      </TitleBar>
      <MenuBar>{menus.map((m) => <MenuItem key={m}>{m}</MenuItem>)}</MenuBar>

      <ToolbarRow>
        <Toolbar>
          <Grip />
          <Tools names="new open save exit | home schem pcb view3d gerber design bom code notes | help" />
        </Toolbar>
        <Toolbar>
          <Grip />
          <SelectBox>
            <Select aria-label="Design variant" defaultValue="base"><option value="base">Base Design</option></Select>
            <SelectArrow width="9" height="7" fill="none"><path d="M1 1l3.500 4l3.500-4" stroke="#444" /></SelectArrow>
          </SelectBox>
        </Toolbar>
        <Toolbar>
          <Grip />
          <Tools names="refresh grid | origin | pan zin zout zall zarea" on="grid" />
        </Toolbar>
        <Toolbar>
          <Grip />
          <Tools names="undo redo | cut copy paste | blkcopy blkmove blkrot blkdel | pick make pack decomp" />
        </Toolbar>
        <Toolbar>
          <Grip />
          <Tools names="auto | find propt | addsheet delsheet hier | erc" on="auto" />
        </Toolbar>
      </ToolbarRow>

      <TabRow>
        <TabShape aria-hidden="true">
          <defs>
            <linearGradient id="tab" x1="0" y1="0" x2="0" y2="1">
              <stop offset="0" stopColor="#e6f3fa" />
              <stop offset="1" stopColor="#b7d6e8" />
            </linearGradient>
          </defs>
          <path d="M-2 25L20 .5H178.500V25z" fill="url(#tab)" />
          <path d="M-2 25L20 .5H178.500V24.500H6000" fill="none" stroke="#6f9fb8" />
        </TabShape>
        <Tab>
          <Icon>{schematicMark}</Icon>
          <span>Schematic Capture</span>
          <TabClose aria-label="Close tab">
            <svg width="12" height="12"><path d="M1 1l10 10M11 1l-10 10" stroke="#555" strokeWidth="2" /></svg>
          </TabClose>
        </Tab>
      </TabRow>

      <Workspace>
        <ModeColumn>
          <ModeBar>
            <ModeGrip />
            <Modes
              names="select comp junction label script bus sub | term pin graph tape gen probe meter | line box circle arc path2d text symbol marker"
              on="text"
            />
          </ModeBar>
          <ModeBar>
            <ModeGrip />
            <Modes names="cw ccw" />
            <AngleInput aria-label="Rotation angle" defaultValue="0°" />
            <ModeLine />
            <Modes names="fliph flipv" />
          </ModeBar>
        </ModeColumn>

        <SidePanel>
          <Overview><Thumbnail /></Overview>
          <Devices>
            <DevicesHead>
              <DeviceButton>C</DeviceButton>
              <DeviceButton>E</DeviceButton>
              <DevicesTitle>GRAPHICS</DevicesTitle>
            </DevicesHead>
            <List role="listbox" aria-label="Graphic styles">
              {devices.map((d, i) => (
                <ListItem key={d} role="option" aria-selected={i === 0} $on={i === 0}>{d}</ListItem>
              ))}
            </List>
          </Devices>
        </SidePanel>

        <Canvas><Schematic /></Canvas>
      </Workspace>

      <StatusRow>
        <StatusBox $w={258}>
          <Grip />
          <PlayButton aria-label="Play"><Icon><path d="M4 1l8 7-8 7z" fill="#1cc828" stroke="#0a7a14" /></Icon></PlayButton>
          <PlayButton aria-label="Step"><Icon><path d="M2.500 1v14" stroke="#1060c8" strokeWidth="2.500" /><path d="M5.500 1l8 7-8 7z" fill="#1878e0" stroke="#0a4a9c" /></Icon></PlayButton>
          <PlayButton aria-label="Pause"><Icon><path d="M5 1v14M11 1v14" stroke="#1468d0" strokeWidth="3" /></Icon></PlayButton>
          <PlayButton aria-label="Stop"><Icon><path d="M1.500 2h13v12h-13z" fill="#1070d8" stroke="#0a4a9c" /></Icon></PlayButton>
          <Separator />
          <Messages>
            <Icon s={14}>
              <circle cx="8" cy="8" r="7.500" fill="#14a024" stroke="#0a4a12" />
              <path d="M8 3v2.500M6 7.500h2.500v5M5.500 12.500h5" stroke="#fff" strokeWidth="1.800" />
            </Icon>
            2 Message(s)
          </Messages>
        </StatusBox>
        <StatusBox $w={412}>
          <Grip />
          <SimText>ANIMATING: 00:00:01.350000 (CPU load 0%)</SimText>
        </StatusBox>
        <StatusBox>
          <Grip />
          <CoordX>+800.0</CoordX>
          <CoordY>-1000.0</CoordY>
          <Unit>th</Unit>
        </StatusBox>
      </StatusRow>

      <Taskbar>
        <TaskButton aria-label="Start">
          <Icon><path d="M0 2.300l6.500-.9v6.100h-6.500zM7.500 1.200l8.500-1.200v7.500h-8.500zM0 8.500h6.500v6.100l-6.500-.9zM7.500 8.500h8.500v7.500l-8.500-1.200z" fill="#fff" /></Icon>
        </TaskButton>
        <Search>
          <svg width="17" height="17" viewBox="0 0 17 17" fill="none" aria-hidden="true">
            <circle cx="10.500" cy="6.500" r="5.500" stroke="#222" strokeWidth="1.300" />
            <path d="M6.500 10.500l-6 6" stroke="#222" strokeWidth="1.300" />
          </svg>
          <SearchInput aria-label="Buscar" placeholder="Escribe aquí para buscar" />
        </Search>
        {tasks.map((t) => (
          <TaskButton key={t.name} aria-label={t.name} $open={t.open} $active={t.active}>
            <Big>{t.art}</Big>
          </TaskButton>
        ))}
        <Tray>
          <TrayButton aria-label="Hidden icons"><svg width="12" height="7" fill="none"><path d="M.5 6.500l5.500-5.500 5.500 5.500" stroke="#fff" strokeWidth="1.300" /></svg></TrayButton>
          <TrayButton aria-label="Microphone">
            <svg width="12" height="16" fill="none"><rect x="3" width="6" height="11" rx="1" fill="#fff" /><path d="M.7 7v4.500h10.600v-4.500M6 12v3.500M3.500 15.500h5" stroke="#fff" /></svg>
          </TrayButton>
          <TrayButton aria-label="Network">
            <svg width="16" height="14" fill="none"><path d="M4.500 1.500h11v8.500h-11zM.5 1.500h4v4h-4zM2.500 5.500v7M10 10v3.500M5 13.500h8" stroke="#fff" /></svg>
          </TrayButton>
          <TrayButton aria-label="Volume">
            <svg width="17" height="14" fill="none"><path d="M.5 4.500h2.500l3.500-3.500v12l-3.500-3.500h-2.500zM8.500 4.500c1.500 1 1.500 4 0 5M11 2.500c3 2 3 7 0 9" stroke="#fff" /><path d="M13.500 1c4 3 4 9 0 12" stroke="#888" /></svg>
          </TrayButton>
          <Clock>07:28 p. m.<br />05/11/2020</Clock>
          <Notices aria-label="2 notifications">
            <svg width="26" height="26" fill="none">
              <path d="M1 2h16v12h-9l-3 3v-3h-4z" fill="#fff" />
              <path d="M4 5.500h10M4 8.500h10M4 11.500h7" stroke="#444" />
              <circle cx="16.500" cy="17" r="8" fill="#454545" stroke="#8a8a8a" />
              <text x="16.500" y="21" fontFamily={sans} fontSize="12" fill="#fff" textAnchor="middle">2</text>
            </svg>
          </Notices>
          <ShowDesktop aria-label="Show desktop" />
        </Tray>
      </Taskbar>
    </Window>
  );
}
